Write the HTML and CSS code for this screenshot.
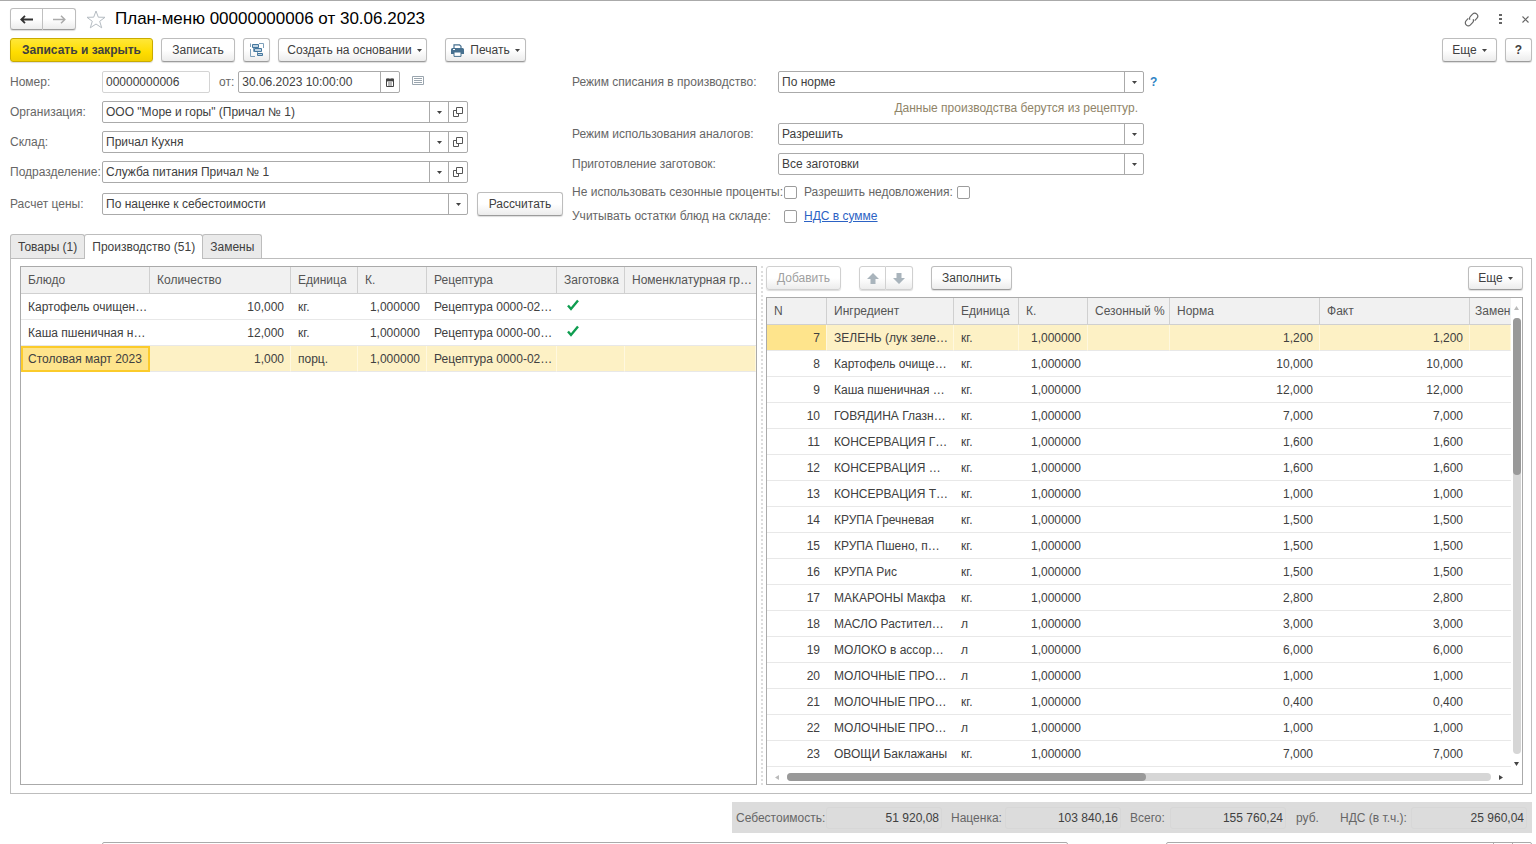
FILE: index.html
```html
<!DOCTYPE html>
<html lang="ru">
<head>
<meta charset="utf-8">
<title>План-меню 00000000006 от 30.06.2023</title>
<link rel="stylesheet" href="styles.css">
</head>
<body>
<svg class="defs" width="0" height="0" aria-hidden="true">
  <symbol id="open" viewBox="0 0 10 10"><path d="M3.500 .5h6v6h-6zM3.500 3.500h-3v6h5v-3" fill="none" stroke="#555"/></symbol>
  <symbol id="caret" viewBox="0 0 5 3"><path d="M0 0h5L2.500 3z" fill="#444"/></symbol>
  <symbol id="check" viewBox="0 0 12 12"><path d="M1 6.500 4 10 11 1.500" fill="none" stroke="#0f9d50" stroke-width="2.400"/></symbol>
</svg>
<main class="app">
  <header class="titlebar">
    <div class="pair nav">
      <button class="btn" aria-label="Назад"><svg width="13" height="9" viewBox="0 0 13 9"><path d="M1 4.500h12M5 .8 1.200 4.500 5 8.200" fill="none" stroke="#333" stroke-width="1.800"/></svg></button>
      <button class="btn" aria-label="Вперед"><svg width="13" height="9" viewBox="0 0 13 9"><path d="M0 4.500h12M8 .8l3.800 3.700L8 8.200" fill="none" stroke="#aaa" stroke-width="1.500"/></svg></button>
    </div>
    <svg class="star" width="20" height="19" viewBox="0 0 20 19"><path d="M10 1l2.300 6.200 6.700.1-5.300 4 2 6.500L10 14l-5.700 3.800 2-6.500L1 7.300l6.700-.1z" fill="#fff" stroke="#b5bcc2"/></svg>
    <h1 class="title">План-меню 00000000006 от 30.06.2023</h1>
    <div class="window-tools">
      <button class="plain" aria-label="Ссылка"><svg width="15" height="15" viewBox="0 0 15 15"><g fill="none" stroke="#666" stroke-width="1.200" transform="rotate(-45 7.500 7.500)"><path d="M6 4.500H3a3 3 0 0 0 0 6h3a3 3 0 0 0 2.800-2"/><path d="M9 10.500h3a3 3 0 0 0 0-6H9a3 3 0 0 0-2.800 2"/></g></svg></button>
      <button class="plain" aria-label="Меню"><svg width="3" height="11" viewBox="0 0 3 11"><path d="M0 0h3v2H0zM0 4h3v2H0zM0 8h3v2H0z" fill="#666"/></svg></button>
      <button class="plain" aria-label="Закрыть"><svg width="7" height="7" viewBox="0 0 7 7"><path d="M.5.5l6 6M6.500.5l-6 6" stroke="#666" stroke-width="1.100"/></svg></button>
    </div>
  </header>

  <div class="toolbar">
    <button class="btn primary">Записать и закрыть</button>
    <button class="btn save">Записать</button>
    <button class="btn icon" aria-label="Структура подчиненности"><svg width="14" height="14" viewBox="0 0 14 14"><g fill="none" stroke="#7d9fba"><path d="M3.500 5v3.500h2M7.500 9v2.500h1M.5 6v7.500H5M9 .5h4.500V5M.5 4V.5"/><path d="M2.500 1.500h6v3h-6zM4.500 5.500h7v3h-7zM7.500 10.500h5v2h-5z" fill="#bfd3e2" stroke="#44779e"/></g></svg></button>
    <button class="btn create">Создать на основании <svg class="caret" width="5" height="3"><use href="#caret"/></svg></button>
    <button class="btn print"><svg width="13" height="13" viewBox="0 0 13 13"><path d="M3 4V.8h5.500L10 2.300V4" fill="#fff" stroke="#47708f" stroke-width="1.200"/><path d="M1.500 4h10A1.500 1.500 0 0 1 13 5.500V10H0V5.500A1.500 1.500 0 0 1 1.500 4z" fill="#47708f"/><path d="M3 8h7v4.400H3z" fill="#fff" stroke="#47708f"/><path d="M2 5.500h2" stroke="#fff"/></svg>Печать <svg class="caret" width="5" height="3"><use href="#caret"/></svg></button>
    <button class="btn more push">Еще <svg class="caret" width="5" height="3"><use href="#caret"/></svg></button>
    <button class="btn help">?</button>
  </div>

  <form class="form">
    <div class="form-left">
      <div class="row">
        <label class="label" for="num">Номер:</label>
        <input class="box number" id="num" value="00000000006" readonly>
        <label class="from" for="date">от:</label>
        <div class="box combo date"><input id="date" value="30.06.2023 10:00:00"><button type="button" aria-label="Календарь"><svg width="8" height="9" viewBox="0 0 8 9"><path d="M.5 1.500h7v7h-7z" fill="#fff" stroke="#444"/><path d="M0 1h8v2H0zM2 0v2M6 0v2M2 5h4M2 7h4" stroke="#444" fill="#444" stroke-width=".8"/></svg></button></div>
        <svg class="note-icon" width="12" height="9" viewBox="0 0 12 9"><path d="M.5.5h11v8H.5z" fill="#fff" stroke="#9aa5ae"/><path d="M2 2.500h8M2 4.500h8M2 6.500h8" stroke="#9aa5ae"/></svg>
      </div>
      <div class="row">
        <label class="label" for="org">Организация:</label>
        <div class="box combo"><input id="org" value="ООО &quot;Море и горы&quot; (Причал № 1)"><button type="button" aria-label="Выбрать"><svg width="5" height="3"><use href="#caret"/></svg></button><button type="button" aria-label="Открыть"><svg width="10" height="10"><use href="#open"/></svg></button></div>
      </div>
      <div class="row">
        <label class="label" for="store">Склад:</label>
        <div class="box combo"><input id="store" value="Причал Кухня"><button type="button" aria-label="Выбрать"><svg width="5" height="3"><use href="#caret"/></svg></button><button type="button" aria-label="Открыть"><svg width="10" height="10"><use href="#open"/></svg></button></div>
      </div>
      <div class="row">
        <label class="label" for="dept">Подразделение:</label>
        <div class="box combo"><input id="dept" value="Служба питания Причал № 1"><button type="button" aria-label="Выбрать"><svg width="5" height="3"><use href="#caret"/></svg></button><button type="button" aria-label="Открыть"><svg width="10" height="10"><use href="#open"/></svg></button></div>
      </div>
      <div class="row tall">
        <label class="label" for="price">Расчет цены:</label>
        <div class="box combo pick"><select id="price"><option>По наценке к себестоимости</option></select><span class="arrow"><svg width="5" height="3"><use href="#caret"/></svg></span></div>
        <button type="button" class="btn calc">Рассчитать</button>
      </div>
    </div>
    <div class="form-right">
      <div class="row">
        <label class="label" for="mode">Режим списания в производство:</label>
        <div class="box combo pick"><select id="mode"><option>По норме</option></select><span class="arrow"><svg width="5" height="3"><use href="#caret"/></svg></span></div>
        <a class="hint" href="#">?</a>
      </div>
      <p class="remark">Данные производства берутся из рецептур.</p>
      <div class="row">
        <label class="label" for="analog">Режим использования аналогов:</label>
        <div class="box combo pick"><select id="analog"><option>Разрешить</option></select><span class="arrow"><svg width="5" height="3"><use href="#caret"/></svg></span></div>
      </div>
      <div class="row gap-top">
        <label class="label" for="prep">Приготовление заготовок:</label>
        <div class="box combo pick"><select id="prep"><option>Все заготовки</option></select><span class="arrow"><svg width="5" height="3"><use href="#caret"/></svg></span></div>
      </div>
      <div class="checks">
        <label for="season">Не использовать сезонные проценты:</label>
        <input type="checkbox" id="season">
        <span class="check-extra"><label for="under">Разрешить недовложения:</label><input type="checkbox" id="under"></span>
        <label for="rest">Учитывать остатки блюд на складе:</label>
        <input type="checkbox" id="rest">
        <a class="link" href="#">НДС в сумме</a>
      </div>
    </div>
  </form>

  <div class="tabs" role="tablist">
    <button class="tab" role="tab">Товары (1)</button>
    <button class="tab active" role="tab" aria-selected="true">Производство (51)</button>
    <button class="tab" role="tab">Замены</button>
  </div>

  <section class="panel">
    <div class="grid dishes">
      <table>
        <colgroup><col class="w-dish"><col class="w-qty"><col class="w-unit-l"><col class="w-k"><col class="w-rec"><col class="w-prep"><col></colgroup>
        <thead><tr><th>Блюдо</th><th>Количество</th><th>Единица</th><th>К.</th><th>Рецептура</th><th>Заготовка</th><th>Номенклатурная гр…</th></tr></thead>
        <tbody>
          <tr><td>Картофель очищен…</td><td class="n">10,000</td><td>кг.</td><td class="n">1,000000</td><td>Рецептура 0000-02…</td><td><svg class="tick" width="14" height="12"><use href="#check"/></svg></td><td></td></tr>
          <tr><td>Каша пшеничная н…</td><td class="n">12,000</td><td>кг.</td><td class="n">1,000000</td><td>Рецептура 0000-00…</td><td><svg class="tick" width="14" height="12"><use href="#check"/></svg></td><td></td></tr>
          <tr class="sel"><td class="cur">Столовая март 2023</td><td class="n">1,000</td><td>порц.</td><td class="n">1,000000</td><td>Рецептура 0000-02…</td><td></td><td></td></tr>
        </tbody>
      </table>
    </div>
    <div class="splitter"></div>
    <div class="ingredients">
      <div class="subbar">
        <button class="btn add" disabled>Добавить</button>
        <div class="pair move">
          <button class="btn" disabled aria-label="Вверх"><svg width="12" height="11" viewBox="0 0 12 11"><path d="M6 0l6 6H8.500v5h-5V6H0z" fill="#a9b4bc"/></svg></button>
          <button class="btn" disabled aria-label="Вниз"><svg width="12" height="11" viewBox="0 0 12 11"><path d="M6 11l6-6H8.500V0h-5v5H0z" fill="#a9b4bc"/></svg></button>
        </div>
        <button class="btn fill">Заполнить</button>
        <button class="btn more push">Еще <svg class="caret" width="5" height="3"><use href="#caret"/></svg></button>
      </div>
      <div class="grid scrolling">
        <div class="view">
          <table>
            <colgroup><col class="w-n"><col class="w-ing"><col class="w-unit"><col class="w-k"><col class="w-season"><col class="w-num"><col class="w-num"><col></colgroup>
            <thead><tr><th>N</th><th>Ингредиент</th><th>Единица</th><th>К.</th><th>Сезонный %</th><th>Норма</th><th>Факт</th><th class="cut">Замен</th></tr></thead>
            <tbody>
              <tr class="sel"><td class="n mark">7</td><td>ЗЕЛЕНЬ (лук зеле…</td><td>кг.</td><td class="n">1,000000</td><td></td><td class="n">1,200</td><td class="n">1,200</td><td></td></tr>
              <tr><td class="n">8</td><td>Картофель очище…</td><td>кг.</td><td class="n">1,000000</td><td></td><td class="n">10,000</td><td class="n">10,000</td><td></td></tr>
              <tr><td class="n">9</td><td>Каша пшеничная …</td><td>кг.</td><td class="n">1,000000</td><td></td><td class="n">12,000</td><td class="n">12,000</td><td></td></tr>
              <tr><td class="n">10</td><td>ГОВЯДИНА Глазн…</td><td>кг.</td><td class="n">1,000000</td><td></td><td class="n">7,000</td><td class="n">7,000</td><td></td></tr>
              <tr><td class="n">11</td><td>КОНСЕРВАЦИЯ Г…</td><td>кг.</td><td class="n">1,000000</td><td></td><td class="n">1,600</td><td class="n">1,600</td><td></td></tr>
              <tr><td class="n">12</td><td>КОНСЕРВАЦИЯ …</td><td>кг.</td><td class="n">1,000000</td><td></td><td class="n">1,600</td><td class="n">1,600</td><td></td></tr>
              <tr><td class="n">13</td><td>КОНСЕРВАЦИЯ Т…</td><td>кг.</td><td class="n">1,000000</td><td></td><td class="n">1,000</td><td class="n">1,000</td><td></td></tr>
              <tr><td class="n">14</td><td>КРУПА Гречневая</td><td>кг.</td><td class="n">1,000000</td><td></td><td class="n">1,500</td><td class="n">1,500</td><td></td></tr>
              <tr><td class="n">15</td><td>КРУПА Пшено, п…</td><td>кг.</td><td class="n">1,000000</td><td></td><td class="n">1,500</td><td class="n">1,500</td><td></td></tr>
              <tr><td class="n">16</td><td>КРУПА Рис</td><td>кг.</td><td class="n">1,000000</td><td></td><td class="n">1,500</td><td class="n">1,500</td><td></td></tr>
              <tr><td class="n">17</td><td>МАКАРОНЫ Макфа</td><td>кг.</td><td class="n">1,000000</td><td></td><td class="n">2,800</td><td class="n">2,800</td><td></td></tr>
              <tr><td class="n">18</td><td>МАСЛО Растител…</td><td>л</td><td class="n">1,000000</td><td></td><td class="n">3,000</td><td class="n">3,000</td><td></td></tr>
              <tr><td class="n">19</td><td>МОЛОКО в ассор…</td><td>л</td><td class="n">1,000000</td><td></td><td class="n">6,000</td><td class="n">6,000</td><td></td></tr>
              <tr><td class="n">20</td><td>МОЛОЧНЫЕ ПРО…</td><td>л</td><td class="n">1,000000</td><td></td><td class="n">1,000</td><td class="n">1,000</td><td></td></tr>
              <tr><td class="n">21</td><td>МОЛОЧНЫЕ ПРО…</td><td>кг.</td><td class="n">1,000000</td><td></td><td class="n">0,400</td><td class="n">0,400</td><td></td></tr>
              <tr><td class="n">22</td><td>МОЛОЧНЫЕ ПРО…</td><td>л</td><td class="n">1,000000</td><td></td><td class="n">1,000</td><td class="n">1,000</td><td></td></tr>
              <tr><td class="n">23</td><td>ОВОЩИ Баклажаны</td><td>кг.</td><td class="n">1,000000</td><td></td><td class="n">7,000</td><td class="n">7,000</td><td></td></tr>
            </tbody>
          </table>
        </div>
        <div class="vbar">
          <svg width="5" height="4" viewBox="0 0 5 4"><path d="M0 4h5L2.500 0z" fill="#bbb"/></svg>
          <div class="track"><div class="thumb"></div></div>
          <svg width="5" height="4" viewBox="0 0 5 4"><path d="M0 0h5L2.500 4z" fill="#444"/></svg>
        </div>
        <div class="hbar">
          <svg width="4" height="5" viewBox="0 0 4 5"><path d="M4 0v5L0 2.500z" fill="#bbb"/></svg>
          <div class="track"><div class="thumb"></div></div>
          <svg width="4" height="5" viewBox="0 0 4 5"><path d="M0 0v5l4-2.500z" fill="#444"/></svg>
        </div>
      </div>
    </div>
  </section>

  <footer class="totals">
    <label class="t-cost" for="cost">Себестоимость:</label><input id="cost" value="51 920,08" readonly>
    <label class="t-markup" for="markup">Наценка:</label><input id="markup" value="103 840,16" readonly>
    <label class="t-total" for="total">Всего:</label><input id="total" value="155 760,24" readonly>
    <span class="t-cur">руб.</span>
    <label class="t-vat" for="vat">НДС (в т.ч.):</label><input id="vat" value="25 960,04" readonly>
  </footer>

  <div class="bottom">
    <input class="box comment" aria-label="Комментарий">
    <div class="box combo author"><input aria-label="Ответственный"><button type="button" aria-label="Выбрать"></button><button type="button" aria-label="Открыть"></button></div>
  </div>
</main>
</body>
</html>
```
FILE: styles.css
```css
* { box-sizing: border-box; }

body {
  margin: 0;
  background: #fff;
  color: #404040;
  font: 12px/16px "Liberation Sans", Arial, sans-serif;
}

button, input, select {
  margin: 0;
  font: inherit;
  color: inherit;
}

svg { display: block; flex: none; }
.defs { position: absolute; }

.app {
  display: flex;
  flex-direction: column;
  height: 100vh;
  padding: 0 4px 0 10px;
  border-top: 1px solid #aaa;
  overflow: hidden;
}

/* Buttons */
.btn {
  display: flex;
  align-items: center;
  justify-content: center;
  height: 24px;
  padding: 0;
  border: 1px solid #bdbdbd;
  border-bottom-color: #9c9c9c;
  border-radius: 3px;
  background: linear-gradient(#fff 50%, #ececec);
  box-shadow: 0 1px 1px #ddd;
  white-space: nowrap;
}
.btn:disabled { color: #a0a0a0; border-color: #d0d0d0; }
.caret { margin-left: 5px; }
.push { margin-left: auto; }
.pair { display: flex; }
.pair .btn:first-child { border-radius: 3px 0 0 3px; }
.pair .btn:last-child { border-radius: 0 3px 3px 0; border-left-width: 0; }
.plain {
  display: flex;
  padding: 0;
  border: 0;
  background: none;
}

/* Title */
.titlebar {
  display: flex;
  align-items: center;
  height: 36px;
}
.nav .btn { width: 33px; height: 22px; }
.star { margin: 0 9px 0 10px; }
.title {
  margin: 0;
  color: #000;
  font-size: 17px;
  font-weight: 400;
  line-height: 22px;
}
.window-tools {
  display: flex;
  align-items: center;
  gap: 20px;
  margin-left: auto;
  padding-right: 3px;
}

/* Toolbar */
.toolbar {
  display: flex;
  gap: 8px;
  margin-top: 1px;
}
.primary {
  width: 143px;
  border-color: #c9ab00;
  background: linear-gradient(#ffe738, #fd0 60%, #f2cf00);
  font-weight: 700;
}
.save { width: 74px; }
.icon { width: 27px; }
.create { width: 149px; padding-left: 4px; }
.print { width: 81px; margin-left: 10px; }
.print svg:first-child { margin-right: 6px; }
.more { width: 55px; }
.help { width: 27px; font-weight: 700; }

/* Form */
.form {
  display: flex;
  gap: 8px;
  margin-top: 9px;
}
.form-left {
  display: flex;
  flex-direction: column;
  gap: 8px;
  flex: 0 0 554px;
}
.form-right { flex: 0 1 620px; }
.row { display: flex; align-items: center; height: 22px; }
.row.tall { height: 26px; }
.gap-top { margin-top: 8px; }
.label, .checks label, .from { color: #666; white-space: nowrap; }
.form-left .label { flex: 0 0 92px; }
.form-right .label { flex: 0 0 206px; }
.box {
  height: 22px;
  border: 1px solid #aaa;
  border-radius: 2px;
  background: #fff;
}
.combo { display: flex; flex: 0 1 366px; min-width: 0; }
.combo input, .combo select {
  flex: 1;
  min-width: 0;
  padding: 0 3px;
  border: 0;
  background: transparent;
  outline: 0;
}
.combo select { appearance: none; }
.combo button, .arrow {
  display: flex;
  align-items: center;
  justify-content: center;
  width: 19px;
  padding: 0;
  border: 0;
  border-left: 1px solid #aaa;
  background: none;
}
.pick { position: relative; }
.arrow {
  position: absolute;
  inset: 0 0 0 auto;
  pointer-events: none;
}
.number { width: 108px; padding: 0 3px; border-color: #d4d4d4; }
.from { margin: 0 4px 0 9px; }
.date { flex: 0 0 162px; }
.note-icon { margin: -4px 0 0 12px; }
.calc { width: 86px; margin-left: 9px; }
.hint { margin-left: 6px; color: #2f83c5; font-weight: 700; text-decoration: none; }
.remark {
  margin: 0;
  width: 566px;
  color: #8f8468;
  line-height: 30px;
  text-align: right;
}
.checks {
  display: grid;
  grid-template-columns: 212px 20px 1fr;
  grid-auto-rows: 24px;
  align-items: center;
  margin-top: 5px;
}
.checks input {
  appearance: none;
  width: 13px;
  height: 13px;
  margin: 0;
  border: 1px solid #9c9c9c;
  border-radius: 2px;
}
.check-extra { display: flex; align-items: center; gap: 4px; }
.link { color: #2c62c4; }

/* Tabs */
.tabs { display: flex; margin-top: 6px; }
.tab {
  height: 24px;
  padding: 0 7px;
  border: 1px solid #bdbdbd;
  border-bottom: 0;
  border-radius: 3px 3px 0 0;
  background: #eaeaea;
}
.tab + .tab { margin-left: -1px; }
.tab.active {
  height: 25px;
  margin-bottom: -1px;
  background: #fff;
  z-index: 1;
}

.panel {
  display: flex;
  flex: 1;
  min-height: 0;
  padding: 7px 8px 8px 9px;
  border: 1px solid #bdbdbd;
}

/* Tables */
.grid { border: 1px solid #aaa; overflow: hidden; min-width: 0; }
.dishes { flex: 736 1 0; }
.splitter { width: 9px; display: flex; justify-content: center; }
.splitter::before { content: ""; border-left: 2px dotted #ddd; }
.ingredients {
  display: flex;
  flex: 758 1 0;
  flex-direction: column;
  min-width: 0;
}
table {
  width: 100%;
  table-layout: fixed;
  border-collapse: separate;
  border-spacing: 0;
}
th, td {
  padding: 0 7px;
  overflow: hidden;
  font-weight: 400;
  text-align: left;
  white-space: nowrap;
}
th {
  height: 27px;
  border-right: 1px solid #d0d0d0;
  border-bottom: 1px solid #d0d0d0;
  background: #f1f1f1;
  color: #555;
}
th:last-child { border-right: 0; }
td { height: 26px; border-bottom: 1px solid #e8e8e8; }
.n { text-align: right; }
.sel td { border-right: 1px solid #fff8df; background: #fdf1c5; }
.sel td.n { padding-right: 6px; }
.sel td.cur { border: 2px solid #fbcb2b; padding: 0 5px; background: #fee48c; }
.sel td.mark { background: #fee48c; }
.cut { padding: 0 0 0 5px; }
.tick { margin: -4px 0 0 2px; }
.w-dish { width: 129px; }
.w-qty { width: 141px; }
.w-unit-l { width: 67px; }
.w-k { width: 69px; }
.w-rec { width: 130px; }
.w-prep { width: 68px; }
.w-n { width: 60px; }
.w-ing { width: 127px; }
.w-unit { width: 65px; }
.w-season { width: 82px; }
.w-num { width: 150px; }

.subbar { display: flex; margin-bottom: 7px; }
.add { width: 75px; }
.move { margin: 0 18px; }
.move .btn { width: 27px; }
.fill { width: 81px; }
.scrolling {
  display: grid;
  flex: 1;
  min-height: 0;
  grid-template-columns: minmax(0, 1fr) 11px;
  grid-template-rows: minmax(0, 1fr) 14px;
}
.view { overflow: hidden; }
.vbar, .hbar { display: flex; align-items: center; }
.vbar { flex-direction: column; gap: 8px; padding: 8px 0 4px; }
.hbar { gap: 8px; padding: 0 8px; }
.track { flex: 1; border-radius: 4px; background: #d6d6d6; }
.thumb { border-radius: 4px; background: #999; }
.vbar .track { width: 8px; }
.vbar .thumb { height: 36%; }
.hbar .track { height: 8px; }
.hbar .thumb { width: 51%; height: 8px; }

/* Totals */
.totals {
  display: flex;
  align-items: center;
  align-self: flex-end;
  height: 31px;
  margin: 8px 0 9px;
  padding: 0 5px 0 4px;
  background: #dcdcdc;
  color: #666;
}
.totals input {
  width: 116px;
  height: 22px;
  padding: 0 2px;
  border: 1px solid #d7d7d7;
  border-radius: 3px;
  background: transparent;
  color: #404040;
  text-align: right;
}
.t-cost { width: 90px; }
.t-markup { width: 63px; padding-left: 9px; }
.t-total { width: 49px; padding-left: 9px; }
.t-cur { width: 54px; padding-left: 10px; }
.t-vat { width: 71px; }

.bottom {
  display: flex;
  flex: none;
  justify-content: space-between;
  margin: 0 0 -20px;
  padding-left: 92px;
}
.comment { flex: 0 1 966px; background: #fff; }
```
